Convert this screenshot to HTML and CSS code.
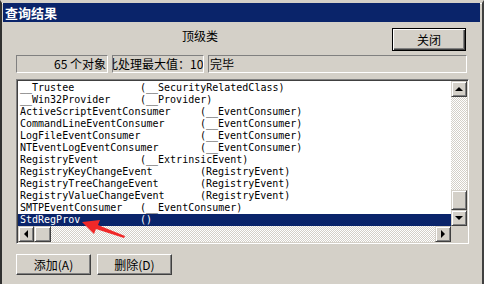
FILE: index.html
```html
<!DOCTYPE html>
<html lang="zh-CN">
<head>
  <meta charset="UTF-8">
  <title>查询结果</title>
  <link rel="stylesheet" href="styles.css">
</head>
<body>
  <div class="window">
    <div class="titlebar">查询结果</div>

    <div class="content">
      <div class="top-row">
        <div class="heading">顶级类</div>
        <button class="btn default">关闭</button>
      </div>

      <div class="status">
        <div class="panel count"><span>65 个对象</span></div>
        <div class="panel limit"><span>此处理最大值：100</span></div>
        <div class="panel state"><span>完毕</span></div>
      </div>

      <div class="listbox">
        <div class="rows">
          <div class="row"><span class="name short">__Trustee</span>(__SecurityRelatedClass)</div>
          <div class="row"><span class="name short">__Win32Provider</span>(__Provider)</div>
          <div class="row"><span class="name long">ActiveScriptEventConsumer</span>(__EventConsumer)</div>
          <div class="row"><span class="name long">CommandLineEventConsumer</span>(__EventConsumer)</div>
          <div class="row"><span class="name long">LogFileEventConsumer</span>(__EventConsumer)</div>
          <div class="row"><span class="name long">NTEventLogEventConsumer</span>(__EventConsumer)</div>
          <div class="row"><span class="name short">RegistryEvent</span>(__ExtrinsicEvent)</div>
          <div class="row"><span class="name long">RegistryKeyChangeEvent</span>(RegistryEvent)</div>
          <div class="row"><span class="name long">RegistryTreeChangeEvent</span>(RegistryEvent)</div>
          <div class="row"><span class="name long">RegistryValueChangeEvent</span>(RegistryEvent)</div>
          <div class="row"><span class="name short">SMTPEventConsumer</span>(__EventConsumer)</div>
          <div class="row selected"><span class="name short">StdRegProv</span>()</div>
        </div>

        <div class="vscroll">
          <div class="sbtn"><i class="tri up"></i></div>
          <div class="track vtrack"><div class="thumb vthumb"></div></div>
          <div class="sbtn"><i class="tri down"></i></div>
        </div>

        <div class="hscroll">
          <div class="sbtn"><i class="tri left"></i></div>
          <div class="thumb hthumb"></div>
          <div class="track htrack"></div>
          <div class="sbtn"><i class="tri right"></i></div>
        </div>

        <div class="corner"></div>
      </div>

      <div class="actions">
        <button class="btn">添加(A)</button>
        <button class="btn">删除(D)</button>
      </div>
    </div>

    <!-- red callout arrow pointing at the selected class -->
    <svg class="pointer" width="484" height="284" viewBox="0 0 484 284">
      <polygon points="82,222 100,220 98,225 125,236 124,238 96,229 94,234" fill="#f02828"/>
    </svg>
  </div>
</body>
</html>
```

FILE: styles.css
```css
body {
  margin: 0;
  background-color: #d4d0c8;
  font-family: "Noto Sans CJK SC", "Liberation Sans", sans-serif;
  font-size: 12px;
}

.window {
  position: relative;
  width: 484px;
  height: 284px;
  box-sizing: border-box;
  background-color: #d4d0c8;
  border-top: 3px solid #d4d0c8;
  border-left: 2px solid #303030;
  border-right: 2px solid #404040;
  box-shadow: inset 0 1px #ffffff;
  overflow: hidden;
}

.titlebar {
  height: 19px;
  margin: 0 2px 0 1px;
  padding-left: 2px;
  background-color: #0a246a;
  color: white;
  font-weight: bold;
  font-size: 13px;
  line-height: 19px;
}

.content {
  padding: 6px 13px 0 14px;
}

.top-row {
  display: flex;
  height: 23px;
}

.heading {
  flex: 1;
  text-align: center;
  padding-right: 8px;
  line-height: 14px;
  padding-top: 1px;
}

.btn {
  box-sizing: border-box;
  width: 75px;
  height: 21px;
  padding: 0;
  background-color: #d4d0c8;
  border: 1px solid;
  border-color: #ffffff #404040 #404040 #ffffff;
  box-shadow: inset -1px -1px #808080, inset 1px 1px #d4d0c8;
  font-family: "Noto Sans CJK SC", sans-serif;
  font-size: 12px;
  color: black;
}

.btn.default {
  width: 74px;
  height: 23px;
  margin-right: 3px;
  border-color: #000000;
  box-shadow: inset 1px 1px #ffffff, inset -1px -1px #404040, inset -2px -2px #808080;
}

.status {
  display: flex;
  gap: 4px;
  height: 18px;
  margin-top: 4px;
  margin-right: 2px;
}

.panel {
  box-sizing: border-box;
  display: flex;
  align-items: center;
  overflow: hidden;
  white-space: nowrap;
  border: 1px solid;
  border-color: #808080 #ffffff #ffffff #808080;
  line-height: 16px;
}

.count {
  width: 92px;
  justify-content: flex-end;
  padding-right: 1px;
}

.limit {
  width: 92px;
  justify-content: center;
}

.limit span {
  flex: none;
}

.state {
  flex: 1;
  padding-left: 1px;
}

.listbox {
  box-sizing: border-box;
  display: grid;
  grid-template-columns: 1fr 16px;
  grid-template-rows: 1fr 16px;
  height: 165px;
  margin-top: 6px;
  background-color: white;
  border: 1px solid;
  border-color: #808080 #ffffff #ffffff #808080;
  box-shadow: inset 1px 1px #404040, inset -1px -1px #d4d0c8;
  padding: 1px;
}

.rows {
  overflow: hidden;
  padding-top: 1px;
  font-family: "DejaVu Sans Mono", "Liberation Mono", monospace;
  font-size: 10px;
  white-space: nowrap;
}

.row {
  height: 12px;
  line-height: 12px;
  padding-left: 2px;
}

.row.selected {
  background-color: #0a246a;
  color: white;
}

.name {
  display: inline-block;
}

.name.short {
  width: 120px;
}

.name.long {
  width: 180px;
}

.vscroll {
  display: flex;
  flex-direction: column;
}

.hscroll {
  display: flex;
}

.corner {
  background-color: #d4d0c8;
}

.track {
  flex: 1;
  display: flex;
  flex-direction: column;
  justify-content: flex-end;
  background: repeating-conic-gradient(#ffffff 0 25%, #d4d0c8 0 50%) 0 0 / 2px 2px;
}

.sbtn,
.thumb {
  box-sizing: border-box;
  display: flex;
  align-items: center;
  justify-content: center;
  width: 16px;
  height: 16px;
  flex: none;
  background-color: #d4d0c8;
  border: 1px solid;
  border-color: #d4d0c8 #404040 #404040 #d4d0c8;
  box-shadow: inset 1px 1px #ffffff, inset -1px -1px #808080;
}

.vthumb {
  height: 20px;
}

.hthumb {
  width: 17px;
}

.tri {
  width: 0;
  height: 0;
  border: 4px solid transparent;
}

.tri.up {
  border-top: 0;
  border-bottom-color: black;
}

.tri.down {
  border-bottom: 0;
  border-top-color: black;
}

.tri.left {
  border-left: 0;
  border-right-color: black;
}

.tri.right {
  border-right: 0;
  border-left-color: black;
}

.actions {
  display: flex;
  gap: 6px;
  margin-top: 10px;
}

.pointer {
  position: absolute;
  left: -2px;
  top: -3px;
}
```
